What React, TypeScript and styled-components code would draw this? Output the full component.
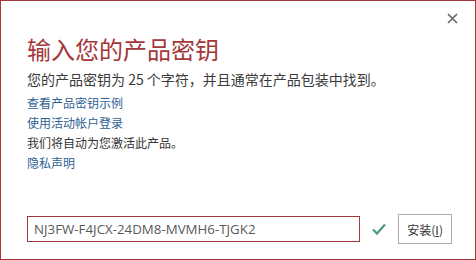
import React from "react";
import styled, { createGlobalStyle } from "styled-components";

const Global = createGlobalStyle`
  html, body { margin: 0; padding: 0; background: #fff; }
  body { font-family: "Noto Sans", "Noto Sans CJK SC", sans-serif; }
`;

const Dialog = styled.div`
  box-sizing: border-box;
  width: 476px;
  height: 260px;
  border: 1px solid #a4373a;
  background: #fff;
  position: relative;
  display: flex;
  flex-direction: column;
  padding: 34px 23px 0 26px;
`;

const Close = styled.button`
  position: absolute;
  top: 10px;
  right: 16px;
  width: 14px;
  height: 14px;
  padding: 0;
  border: none;
  background: transparent;
  display: flex;
  align-items: center;
  justify-content: center;
`;

const Title = styled.h1`
  margin: 0;
  font-family: "Noto Sans CJK SC", sans-serif;
  font-weight: 400;
  font-size: 24px;
  line-height: 28px;
  color: #a4373a;
`;

const Subtitle = styled.p`
  margin: 6px 0 0;
  font-family: "Noto Sans CJK SC", sans-serif;
  font-weight: 400;
  font-size: 14px;
  line-height: 20px;
  color: #3a3a3a;
`;

const Lines = styled.div`
  margin-top: 4px;
  display: flex;
  flex-direction: column;
`;

const Line = styled.a<{ $link?: boolean }>`
  font-family: "Noto Sans CJK SC", sans-serif;
  font-size: 12px;
  line-height: 20px;
  color: ${(p) => (p.$link ? "#2f5f93" : "#333")};
  text-decoration: none;
  cursor: ${(p) => (p.$link ? "pointer" : "default")};
`;

const Footer = styled.div`
  margin-top: auto;
  margin-bottom: 15px;
  display: flex;
  align-items: center;
`;

const KeyInput = styled.input`
  box-sizing: border-box;
  width: 335px;
  height: 26px;
  border: 1px solid #a4373a;
  padding: 0 6px;
  font-family: "Open Sans", sans-serif;
  font-size: 13.3px;
  color: #595959;
  outline: none;
`;

const Check = styled.span`
  width: 38px;
  display: flex;
  justify-content: center;
`;

const Install = styled.button`
  box-sizing: border-box;
  width: 54px;
  height: 30px;
  border: 1px solid #adadad;
  background: #fff;
  font-family: "Noto Sans CJK SC", sans-serif;
  font-size: 12px;
  color: #333;
  padding: 0;
  u { text-decoration: underline; }
`;

export default function App() {
  return (
    <>
      <Global />
      <Dialog>
        <Close aria-label="close">
          <svg width="11" height="11" viewBox="0 0 11 11">
            <path d="M1 1 L10 10 M10 1 L1 10" stroke="#666" strokeWidth="1.6" />
          </svg>
        </Close>
        <Title>输入您的产品密钥</Title>
        <Subtitle>您的产品密钥为 25 个字符，并且通常在产品包装中找到。</Subtitle>
        <Lines>
          <Line $link>查看产品密钥示例</Line>
          <Line $link>使用活动帐户登录</Line>
          <Line>我们将自动为您激活此产品。</Line>
          <Line $link>隐私声明</Line>
        </Lines>
        <Footer>
          <KeyInput defaultValue="NJ3FW-F4JCX-24DM8-MVMH6-TJGK2" />
          <Check>
            <svg width="14" height="12" viewBox="0 0 14 12">
              <path d="M1 6.5 L5 10.5 L13 1.5" fill="none" stroke="#4a9a7a" strokeWidth="2.2" />
            </svg>
          </Check>
          <Install>安装(<u>I</u>)</Install>
        </Footer>
      </Dialog>
    </>
  );
}
